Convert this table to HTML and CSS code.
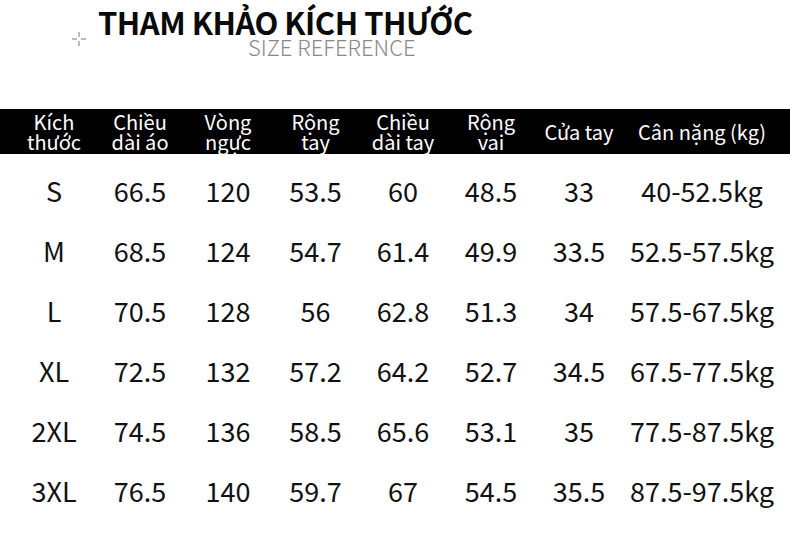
FILE: index.html
```html
<!DOCTYPE html>
<html lang="vi">
<head>
<meta charset="utf-8">
<link rel="stylesheet" href="styles.css">
</head>
<body>
<div class="page">
  <header class="head">
    <svg class="mark" width="14" height="14" viewBox="0 0 14 14">
      <path d="M7 0V5M7 9V14M0 7H5M9 7H14" stroke="#777" stroke-width="1" fill="none"/>
    </svg>
    <h1 class="title">THAM KHẢO KÍCH THƯỚC</h1>
    <div class="sub">SIZE REFERENCE</div>
  </header>
  <div class="bar grid">
    <div>Kích<br>thước</div>
    <div>Chiều<br>dài áo</div>
    <div>Vòng<br>ngực</div>
    <div>Rộng<br>tay</div>
    <div>Chiều<br>dài tay</div>
    <div>Rộng<br>vai</div>
    <div>Cửa tay</div>
    <div>Cân nặng (kg)</div>
  </div>
  <div class="rows">
    <div class="grid row"><div>S</div><div>66.5</div><div>120</div><div>53.5</div><div>60</div><div>48.5</div><div>33</div><div>40-52.5kg</div></div>
    <div class="grid row"><div>M</div><div>68.5</div><div>124</div><div>54.7</div><div>61.4</div><div>49.9</div><div>33.5</div><div>52.5-57.5kg</div></div>
    <div class="grid row"><div>L</div><div>70.5</div><div>128</div><div>56</div><div>62.8</div><div>51.3</div><div>34</div><div>57.5-67.5kg</div></div>
    <div class="grid row"><div>XL</div><div>72.5</div><div>132</div><div>57.2</div><div>64.2</div><div>52.7</div><div>34.5</div><div>67.5-77.5kg</div></div>
    <div class="grid row"><div>2XL</div><div>74.5</div><div>136</div><div>58.5</div><div>65.6</div><div>53.1</div><div>35</div><div>77.5-87.5kg</div></div>
    <div class="grid row"><div>3XL</div><div>76.5</div><div>140</div><div>59.7</div><div>67</div><div>54.5</div><div>35.5</div><div>87.5-97.5kg</div></div>
  </div>
</div>
</body>
</html>
```
FILE: styles.css
```css
* { box-sizing: border-box; margin: 0; padding: 0; }
html, body { width: 790px; height: 536px; overflow: hidden; background: #fff; }
body { font-family: "Noto Sans CJK SC", "Noto Sans", sans-serif; color: #111; }
.page { width: 790px; height: 536px; }
.head { position: relative; height: 109px; }
.mark { position: absolute; left: 72px; top: 32px; }
.title {
  position: absolute; left: 98px; top: 0;
  font-size: 31px; font-weight: 700; color: #0a0a0a; letter-spacing: -0.5px;
  line-height: 44px; white-space: nowrap;
}
.sub {
  position: absolute; left: 248px; top: 33px;
  font-size: 22px; font-weight: 300; color: #888; line-height: 26px;
  white-space: nowrap;
}
.grid {
  display: grid;
  grid-template-columns: 84px 88px 88px 87px 88px 88px 88px 158px;
  padding-left: 12px;
  text-align: center;
}
.bar {
  background: #000; color: #fff;
  height: 45px; align-items: center;
  font-size: 20px; line-height: 20px;
}
.rows { padding-top: 7px; }
.row {
  height: 60px; align-items: center;
  font-size: 27px; line-height: 30px; color: #111;
}
```
